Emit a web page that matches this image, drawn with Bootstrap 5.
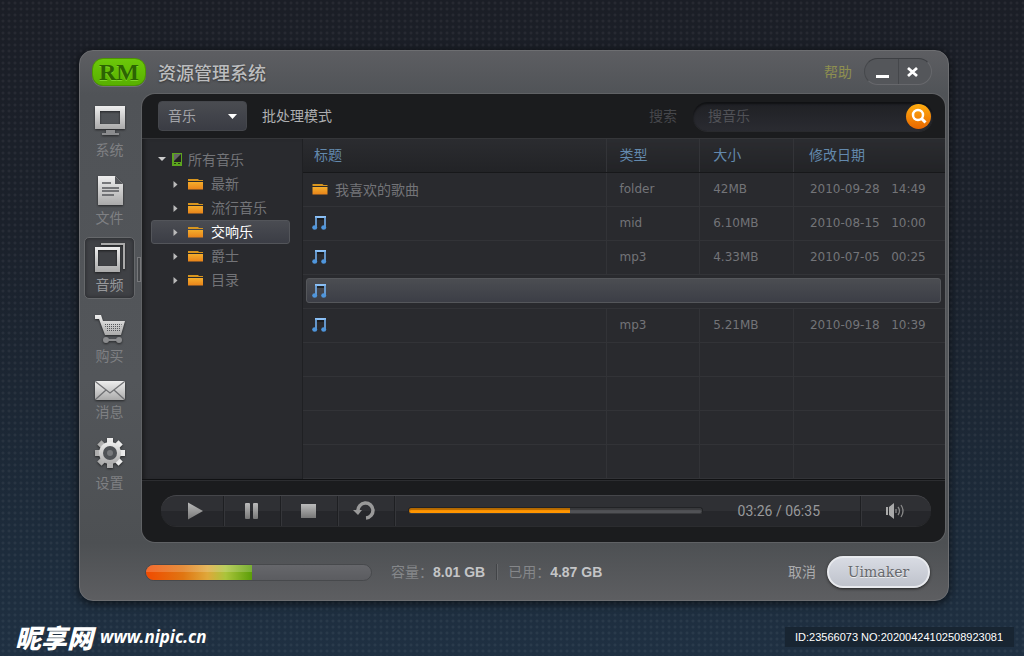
<!DOCTYPE html>
<html lang="zh-CN">
<head>
<meta charset="utf-8">
<meta name="viewport" content="width=device-width, initial-scale=1">
<title>资源管理系统</title>
<link href="https://cdn.jsdelivr.net/npm/bootstrap@5.3.0/dist/css/bootstrap.min.css" rel="stylesheet">
<style>
:root { --line:#323337; --dim:#737478; }
body {
  font: 14px/20px "Liberation Sans", "Noto Sans CJK SC", sans-serif; color: var(--dim);
  background: radial-gradient(circle at 3px 3px, rgba(255,255,255,.05) 0 1px, transparent 2px) 0 0/6px 6px,
    linear-gradient(#1b1e26, #1b212b 35%, #1d2c3c 85%, #1f3042);
}
a { color: inherit; text-decoration: none; }
button { color: inherit; border: 0; background: none; padding: 0; }
svg { display: block; }
.desk { padding: 50px 75px 0 79px; }
.win { border: 1px solid #6d6e71; border-radius: 14px; box-shadow: 0 2px 10px rgba(0,0,0,.7);
  background: linear-gradient(#5d5e62, #505357 44px, #53565a 60%, #4d5053 492px, #5d5e61); }
.titlebar { height: 43px; padding: 0 16px 2px 12px; }
.logo { width: 54px; height: 28px; border-radius: 11px; background: linear-gradient(#6cc80a, #58b000); border: 1px solid #4c9600;
  box-shadow: 0 1px 0 #707276; font: bold 24px/26px "Liberation Serif", serif; color: #2c6402; text-align: center; text-shadow: 0 1px 0 #7fd62a; }
.apptitle { font: 500 18px/26px "Noto Sans CJK SC", sans-serif; color: #bcbdbf; text-shadow: 0 1px 2px #333; margin: 0 0 0 12px; }
.help { color: #8e8f50; margin-right: 12px; }
.winctl { width: 68px; height: 27px; border-radius: 14px; border: 1px solid #67686c; border-top-color: #3d3f43; border-left-color: #46484c; background: #54565a; overflow: hidden; }
.winctl button + button { border-left: 1px solid #45474b; }
.side { width: 62px; padding: 6px 7px 0 4px; }
.side nav { gap: 5px; }
.side a { padding: 5px 0 2px; gap: 2px; border: 1px solid transparent; border-radius: 5px; color: #7f8083; line-height: 21px; width: 51px; }
.side a.active { background: #3f4145; border-color: #66686b; box-shadow: inset 0 0 4px #25262a; color: #97989b; }
.side svg { filter: drop-shadow(0 1px 1px rgba(0,0,0,.55)); }
.grip { width: 4px; height: 25px; border: 1px solid #77787b; background: #46484b; position: absolute; right: 1px; top: 163px; }
.panel { background: #1b1c1e; border-radius: 13px; margin-right: 3px; min-width: 0; box-shadow: 0 0 0 1px #606265; overflow: hidden; }
.tools { height: 45px; padding: 0 12px 0 16px; border-bottom: 1px solid #353639; }
.kind { width: 89px; height: 30px; border: 1px solid #45474c; border-radius: 4px; color: #a3a4a8; padding: 0 9px; appearance: none;
  background: url("data:image/svg+xml,%3Csvg xmlns='http://www.w3.org/2000/svg' width='9' height='5'%3E%3Cpath d='M0 0h9L4.500 5z' fill='white'/%3E%3C/svg%3E") right 9px center no-repeat, linear-gradient(#4a4c51, #3a3c44); }
.batch { color: #adaeb0; margin-left: 15px; }
.findlabel { color: #46474b; margin-right: 16px; }
.find { width: 240px; height: 29px; border-radius: 15px; background: linear-gradient(#1f2024, #2a2b31); box-shadow: inset 0 2px 2px #101113, 0 1px 0 #292a2d; padding: 0 2px 0 15px; }
.find input { background: none; border: 0; outline: 0; color: #aaa; min-width: 0; padding: 0; }
.find input::placeholder { color: #515257; opacity: 1; }
.find button { width: 25px; height: 25px; border-radius: 50%; background: linear-gradient(#ffae10, #e86600); flex: none; }
.mid { background: #292a2e; border-bottom: 1px solid #101113; }
.tree { width: 161px; padding: 8px 12px 0 9px; border-right: 1px solid #1f2023; box-shadow: inset 5px 0 5px -3px rgba(0,0,0,.4); }
.tree a { display: flex; align-items: center; height: 24px; border: 1px solid transparent; border-radius: 3px; padding-left: 21px; }
.tree a.active { color: #fff; background: linear-gradient(#4a4c52, #3b3d45); border-color: #53555a; }
.tree .root { padding-left: 6px; height: 25px; }
.tree .device { margin: 0 2px 0 4px; }
.tree .fold { margin: 0 8px 0 10px; }
.files { table-layout: fixed; width: 100%; border-collapse: collapse; }
.files th { height: 33px; font-weight: 400; color: #6389ad; padding: 0 0 0 11px; background: linear-gradient(#2b2c30, #222326); border-right: 1px solid #333438; border-bottom: 1px solid #17181a; }
.files td { height: 34px; padding: 0 0 0 13px; border: 1px solid var(--line); border-width: 0 1px 1px 0; white-space: pre; font: 12px/20px "DejaVu Sans", "Noto Sans CJK SC", sans-serif; }
.files th + th { padding-left: 13px; }
.files th:last-child { padding-left: 15px; }
.files th:last-child, .files td:last-child { border-right: 0; }
.files td:last-child { padding-left: 16px; }
.files td:first-child { padding-left: 9px; }
.files td.picked { padding: 0 4px 1px 3px; }
.files .pickbar { height: 25px; padding-left: 5px; border: 1px solid #55575b; border-radius: 3px; background: linear-gradient(#4b4d52, #3c3e46); }
.named { font: 14px/20px "Noto Sans CJK SC", sans-serif; gap: 7px; }
.player { padding: 14px 14px 16px 19px; border-top: 1px solid #2c2d30; }
.deck { height: 31px; border-radius: 16px; overflow: hidden; background: linear-gradient(#2f3034 50%, #26272b 50%); border-top: 1px solid #45464a; box-shadow: 0 1px 0 #2b2c2f; }
.deck > button, .deck > div { height: 100%; border-right: 1px solid #1e1f22; box-shadow: 1px 0 0 #35363a; }
.deck > button:last-child { border-right: 0; box-shadow: none; }
.seek { appearance: none; height: 7px; border-radius: 4px; margin: 0 0 0 13px; border: 1px solid #222326; border-bottom-color: #3a3b3e;
  background: linear-gradient(90deg, #ff9500 var(--at), #515256 var(--at)); box-shadow: inset 0 2px 1px rgba(0,0,0,.3); }
.seek::-webkit-slider-thumb { appearance: none; width: 1px; height: 1px; }
.clock { font: 14px/20px Roboto, sans-serif; color: #98999b; white-space: nowrap; padding: 0 40px 0 35px; }
.status { height: 57px; padding: 2px 18px 0 65px; margin-top: 1px; color: #85878a; }
.meter { width: 227px; height: 17px; border-radius: 9px; background: linear-gradient(#66676b, #5b5c60); border: 1px solid #47494c; }
.meter .progress-bar { background: linear-gradient(rgba(255,255,255,.18) 50%, transparent 50%), linear-gradient(90deg, #f14a00, #e07612 35%, #dfa83a 58%, #abc43b 75%, #5b9e08); }
.status b { font: bold 14px/20px "Liberation Sans", sans-serif; color: #c4c5c7; }
.volume { margin-left: 19px; }
.split { width: 2px; height: 16px; background: #424447; border-right: 1px solid #66686b; margin: 0 10px 0 11px; }
.cancel { color: #aaabad; margin-right: 11px; }
.go { width: 103px; height: 32px; border-radius: 16px; border: 2px solid #e8eaee; background: linear-gradient(#d8dbe3, #bfc3cc); box-shadow: 0 1px 3px #222; font: 14px/26px "DejaVu Serif", serif; color: #66686c; text-shadow: 0 1px 0 #eee; }
.marks { color: #fff; padding: 0 10px 4px 15px; }
.brand { font: italic bold 17px/30px "Noto Sans", sans-serif; gap: 7px; }
.brand span { font: italic 900 26px/30px "Noto Sans CJK SC", sans-serif; }
.serial { font: 11px/20px "Liberation Sans", sans-serif; background: #182532; padding: 0 11px 0 10px; }
</style>
</head>
<body>
<svg width="0" height="0" class="position-absolute" aria-hidden="true">
  <defs>
    <linearGradient id="silver" x1="0" y1="0" x2="0" y2="1"><stop stop-color="#eee"/><stop offset="1" stop-color="#aaa"/></linearGradient>
    <linearGradient id="steel" x1="0" y1="0" x2="0" y2="1"><stop stop-color="#bbb"/><stop offset="1" stop-color="#777"/></linearGradient>
    <linearGradient id="amber" x1="0" y1="0" x2="0" y2="1"><stop stop-color="#f5ae2c"/><stop offset="1" stop-color="#e8831a"/></linearGradient>
    <pattern id="mesh" width="2" height="2" patternUnits="userSpaceOnUse"><path d="M0 0h1v1H0z" fill="#55575b"/></pattern>
    <symbol id="folder" viewBox="0 0 15 12"><path d="M0 1h10l1 1h4v1H0z" fill="#d8951e"/><path d="M0 4h15v7.500H0z" fill="url(#amber)"/></symbol>
    <symbol id="note" viewBox="0 0 15 14"><path d="M3 0h11v2H3z" fill="#8cc0f5"/><path d="M4 1v10M13 1v10" stroke="#74b0ee" stroke-width="1.600"/><ellipse cx="2.700" cy="11.500" rx="2.500" ry="2.200" fill="#4f96dc"/><ellipse cx="11.700" cy="11.500" rx="2.500" ry="2.200" fill="#4f96dc"/><path d="M5 3h7" stroke="#14181d" stroke-width="1.500"/></symbol>
    <symbol id="arrow" viewBox="0 0 5 7"><path d="M.5 0 4.500 3.500.5 7z" fill="#bbb"/></symbol>
  </defs>
</svg>
<div class="min-vh-100 d-flex flex-column">
  <main class="desk">
    <div class="win">
      <header class="titlebar d-flex align-items-center">
        <div class="logo">RM</div>
        <h1 class="apptitle">资源管理系统</h1>
        <a class="help ms-auto" href="#">帮助</a>
        <div class="winctl d-flex">
          <button type="button" class="flex-fill" aria-label="最小化"><svg width="32" height="25"><path d="M11 16h13v3H11z" fill="#fff"/></svg></button>
          <button type="button" class="flex-fill" aria-label="关闭"><svg width="32" height="25"><path d="m9 9 9 8M18 9l-9 8" stroke="#fff" stroke-width="2.800"/></svg></button>
        </div>
      </header>
      <div class="d-flex">
        <aside class="side position-relative flex-shrink-0">
          <nav class="d-flex flex-column">
            <a href="#" class="d-flex flex-column align-items-center"><svg width="32" height="32"><path d="M1 0h30v23H1zM6 5v13h20V5z" fill="url(#silver)" fill-rule="evenodd"/><path d="M12 24h9v3h4v2H8v-2h4z" fill="#8b8c8e"/></svg><span>系统</span></a>
            <a href="#" class="d-flex flex-column align-items-center"><svg width="30" height="31"><path d="M3 1h17l8 8v21H3z" fill="url(#silver)"/><path d="M20 1v8h8z" fill="#55575b"/><path d="M7 8h9M7 13h17M7 16h17M7 20h12" stroke="#55575b" stroke-width="1.500"/></svg><span>文件</span></a>
            <a href="#" class="d-flex flex-column align-items-center active" aria-current="page"><svg width="30" height="30"><path d="M6 1h23v25" fill="none" stroke="#aaa" stroke-width="2"/><path d="M0 4h25v25H0zM3 7v16h19V7z" fill="url(#silver)" fill-rule="evenodd"/></svg><span>音频</span></a>
            <a href="#" class="d-flex flex-column align-items-center"><svg width="30" height="34"><path d="M0 5h6l2 6h22l-4 14H10L4 9H0z" fill="url(#silver)"/><path d="M9 13h18l-2 9H12z" fill="url(#mesh)"/><path d="M11 30h14" stroke="#8b8c8e" stroke-width="2"/><circle cx="11" cy="30" r="3" fill="#8b8c8e"/><circle cx="24" cy="30" r="3" fill="#8b8c8e"/></svg><span>购买</span></a>
            <a href="#" class="d-flex flex-column align-items-center"><svg width="30" height="19"><rect width="30" height="19" rx="2" fill="url(#silver)"/><path d="m1 1 14 11L29 1M1 18l10-9M29 18l-10-9" fill="none" stroke="#707174" stroke-width="1.300"/></svg><span>消息</span></a>
            <a href="#" class="d-flex flex-column align-items-center"><svg width="30" height="34" viewBox="-15 -16 30 34"><g fill="url(#silver)"><path d="M-3-15h6v30h-6z"/><path d="M-3-15h6v30h-6z" transform="rotate(45)"/><path d="M-3-15h6v30h-6z" transform="rotate(90)"/><path d="M-3-15h6v30h-6z" transform="rotate(135)"/><circle r="11"/></g><circle r="7" fill="#4f5256"/><circle r="3" fill="#77797c"/></svg><span>设置</span></a>
          </nav>
          <div class="grip"></div>
        </aside>
        <section class="panel flex-grow-1">
          <form class="tools d-flex align-items-center">
            <select class="kind" aria-label="分类"><option>音乐</option></select>
            <a class="batch me-auto" href="#">批处理模式</a>
            <label class="findlabel" for="q">搜索</label>
            <div class="find d-flex align-items-center"><input id="q" class="flex-grow-1" type="search" placeholder="搜音乐"><button type="button" aria-label="搜索"><svg width="25" height="25"><circle cx="12" cy="11" r="5" fill="none" stroke="#fff" stroke-width="2.500"/><path d="m15.500 14.500 4 4" stroke="#fff" stroke-width="3"/></svg></button></div>
          </form>
          <div class="mid d-flex">
            <ul class="tree list-unstyled mb-0 flex-shrink-0">
              <li><a href="#" class="root"><svg width="8" height="5"><path d="M0 0h8L4 4z" fill="#ccc"/></svg><svg class="device" width="16" height="13"><path d="M2 0h10v13H2z" fill="#5ca51e"/><path d="M4 1h7v8H4z" fill="#222"/><path d="M4 1h7L4 8z" fill="#666"/><path d="M4 10h2v1H4zM8 10h2v1H8z" fill="#243c10"/></svg>所有音乐</a></li>
              <li><a href="#"><svg width="5" height="7"><use href="#arrow"/></svg><svg class="fold" width="15" height="12"><use href="#folder"/></svg>最新</a></li>
              <li><a href="#"><svg width="5" height="7"><use href="#arrow"/></svg><svg class="fold" width="15" height="12"><use href="#folder"/></svg>流行音乐</a></li>
              <li><a href="#" class="active"><svg width="5" height="7"><use href="#arrow"/></svg><svg class="fold" width="15" height="12"><use href="#folder"/></svg>交响乐</a></li>
              <li><a href="#"><svg width="5" height="7"><use href="#arrow"/></svg><svg class="fold" width="15" height="12"><use href="#folder"/></svg>爵士</a></li>
              <li><a href="#"><svg width="5" height="7"><use href="#arrow"/></svg><svg class="fold" width="15" height="12"><use href="#folder"/></svg>目录</a></li>
            </ul>
            <table class="files">
              <colgroup><col style="width:47.2%"><col style="width:14.6%"><col style="width:14.6%"><col></colgroup>
              <thead><tr><th>标题</th><th>类型</th><th>大小</th><th>修改日期</th></tr></thead>
              <tbody>
                <tr><td><div class="d-flex align-items-center named"><svg width="16" height="12"><use href="#folder"/></svg>我喜欢的歌曲</div></td><td>folder</td><td>42MB</td><td>2010-09-28   14:49</td></tr>
                <tr><td><svg width="15" height="14"><use href="#note"/></svg></td><td>mid</td><td>6.10MB</td><td>2010-08-15   10:00</td></tr>
                <tr><td><svg width="15" height="14"><use href="#note"/></svg></td><td>mp3</td><td>4.33MB</td><td>2010-07-05   00:25</td></tr>
                <tr><td colspan="4" class="picked"><div class="pickbar d-flex align-items-center"><svg width="15" height="14"><use href="#note"/></svg></div></td></tr>
                <tr><td><svg width="15" height="14"><use href="#note"/></svg></td><td>mp3</td><td>5.21MB</td><td>2010-09-18   10:39</td></tr>
                <tr><td></td><td></td><td></td><td></td></tr><tr><td></td><td></td><td></td><td></td></tr><tr><td></td><td></td><td></td><td></td></tr><tr><td></td><td></td><td></td><td></td></tr>
              </tbody>
            </table>
          </div>
          <div class="player">
            <div class="deck d-flex align-items-center">
              <button type="button" aria-label="播放"><svg width="62" height="30"><path d="M27 6.500v17L42 15z" fill="url(#steel)"/></svg></button>
              <button type="button" aria-label="暂停"><svg width="56" height="30"><rect x="21" y="7" width="5" height="16" rx="1" fill="url(#steel)"/><rect x="29" y="7" width="5" height="16" rx="1" fill="url(#steel)"/></svg></button>
              <button type="button" aria-label="停止"><svg width="56" height="30"><path d="M20 8h15v14H20z" fill="url(#steel)"/></svg></button>
              <button type="button" aria-label="重播"><svg width="56" height="30"><path d="M20 15a7.500 7.500 0 1 1 8 7" fill="none" stroke="#999" stroke-width="3.500"/><path d="M15 14h9l-4 5z" fill="#999"/></svg></button>
              <input class="seek flex-grow-1" type="range" value="55" style="--at:55%" aria-label="进度">
              <div class="clock d-flex align-items-center">03:26 / 06:35</div>
              <button type="button" aria-label="音量"><svg width="70" height="30"><path d="M25 11h2v8h-2zM28 11l5-4v16l-5-4z" fill="#aaa"/><path d="M35 13v4M37 11q3 4 0 8M40 9q4 6 0 12" fill="none" stroke="#888" stroke-width="1.300"/></svg></button>
            </div>
          </div>
        </section>
      </div>
      <footer class="status d-flex align-items-center">
        <div class="meter progress" role="progressbar" aria-label="容量" aria-valuenow="47"><div class="progress-bar" style="width:47%"></div></div>
        <span class="volume">容量：<b>8.01 GB</b></span><i class="split"></i><span>已用：<b>4.87 GB</b></span>
        <button type="button" class="cancel ms-auto">取消</button>
        <button type="button" class="go">Uimaker</button>
      </footer>
    </div>
  </main>
  <div class="marks mt-auto d-flex justify-content-between align-items-center">
    <div class="brand d-flex align-items-center"><span>昵享网</span>www.nipic.cn</div>
    <div class="serial">ID:23566073 NO:20200424102508923081</div>
  </div>
</div>
</body>
</html>
